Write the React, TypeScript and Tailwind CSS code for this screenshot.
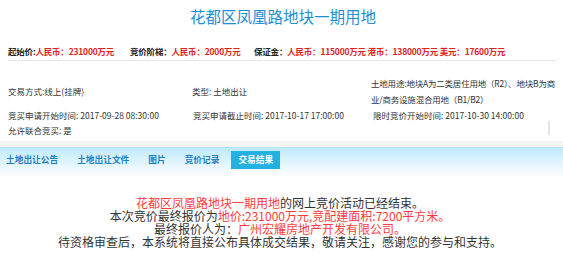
import * as React from "react";

const cjk = "font-['Noto_Sans_CJK_SC',_'Noto_Sans',sans-serif]";

function InfoRow() {
  return (
    <div className="flex items-center h-[16px] text-[8.5px] font-bold text-[#222] whitespace-nowrap tracking-[-0.2px]">
      <div className="w-[122px]">
        起始价:<span className="text-[#e3211c]">人民币：231000万元</span>
      </div>
      <div className="w-[124px]">
        竞价阶梯：<span className="text-[#e3211c]">人民币：2000万元</span>
      </div>
      <div>
        保证金：
        <span className="text-[#e3211c]">人民币：115000万元 港币：138000万元 美元：17600万元</span>
      </div>
    </div>
  );
}

function Details() {
  return (
    <div className="text-[8.5px] text-[#333] leading-[16px] whitespace-nowrap">
      <div className="flex items-center h-[32px]">
        <div className="w-[185px]">交易方式:线上(挂牌)</div>
        <div className="w-[180px]">类型: 土地出让</div>
        <div className="tracking-[-0.2px]">
          土地用途:地块A为二类居住用地（R2）、地块B为商
          <br />
          业/商务设施混合用地（B1/B2）
        </div>
      </div>
      <div className="flex items-center h-[16px]">
        <div className="w-[185px]">竞买申请开始时间: 2017-09-28 08:30:00</div>
        <div className="w-[180px]">竞买申请截止时间: 2017-10-17 17:00:00</div>
        <div>限时竞价开始时间: 2017-10-30 14:00:00</div>
      </div>
      <div className="flex items-center h-[14px] relative">
        <div>允许联合竞买: 是</div>
        <div className="absolute right-[5px] -top-[2px] w-[2px] h-[14px] bg-[#e4e4e4]" />
      </div>
    </div>
  );
}

function Tabs() {
  const tabs = ["土地出让公告", "土地出让文件", "图片", "竞价记录"];
  return (
    <div className="h-[30px] bg-gradient-to-b from-[#bfeafa] to-white border-t border-[#b3e3f5] pt-[3px]">
      <div className="flex items-center gap-[19px] pl-[6px] h-[18px] text-[8.7px] font-bold text-[#1f7fc4]">
        {tabs.map((t) => (
          <div key={t}>{t}</div>
        ))}
        <div className="-ml-[7px] px-[7px] h-[18px] flex items-center bg-[#22b1e0] text-white">
          交易结果
        </div>
      </div>
    </div>
  );
}

export default function App() {
  return (
    <div className={`w-[563px] h-[264px] bg-white overflow-hidden ${cjk}`}>
      <div className="w-[566px] h-[32px] flex items-center justify-center text-[15.5px] text-[#1d90d4] pt-[1px]">
        花都区凤凰路地块一期用地
      </div>
      <div className="mx-[8px] mt-[11px] pb-[1px] border-b border-[#e6e6e6] w-[549px]">
        <InfoRow />
      </div>
      <div className="px-[8px] pt-[14px]">
        <Details />
      </div>
      <div className="h-[6px] bg-[#f4f5f2] mt-[4px]" />
      <Tabs />
      <div className="w-[560px] pt-[19px] text-center text-[12px] leading-[13px] text-[#333]">
        <div>
          <span className="text-[#ff3b3b]">花都区凤凰路地块一期用地</span>的网上竞价活动已经结束。
        </div>
        <div>
          本次竞价最终报价为<span className="text-[#ff3b3b]">地价:231000万元,竞配建面积:7200平方米。</span>
        </div>
        <div>
          最终报价人为：<span className="text-[#ff3b3b]">广州宏耀房地产开发有限公司。</span>
        </div>
        <div>待资格审查后，本系统将直接公布具体成交结果，敬请关注，感谢您的参与和支持。</div>
      </div>
    </div>
  );
}
